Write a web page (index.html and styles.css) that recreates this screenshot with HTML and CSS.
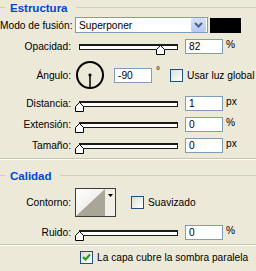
FILE: index.html
```html
<!DOCTYPE html>
<html lang="es">
<head>
    <meta charset="UTF-8">
    <title>Sombra paralela</title>
    <link rel="stylesheet" href="styles.css">
</head>
<body>

    <div class="panel">
        <!-- Estructura -->
        <div class="group-title"><span>Estructura</span></div>

        <div class="row row-fusion">
            <div class="label">Modo de fusión:</div>
            <div class="select">
                <span class="select-value">Superponer</span>
                <span class="select-btn">
                    <svg width="15" height="14" viewBox="0 0 15 14"><path d="M4 5 L7.5 8.5 L11 5" fill="none" stroke="#4d6185" stroke-width="2"/></svg>
                </span>
            </div>
            <div class="color-swatch"></div>
        </div>

        <div class="row">
            <div class="label">Opacidad:</div>
            <div class="slider">
                <div class="track"></div>
                <svg class="thumb" style="left: 82%" width="9" height="10" viewBox="0 0 9 10"><path d="M4.5 0.5 L8.5 4.5 L8.5 9.5 L0.5 9.5 L0.5 4.5 Z" fill="#fff" stroke="#000"/></svg>
            </div>
            <div class="field">82</div>
            <span class="unit">%</span>
        </div>

        <div class="row row-angle">
            <div class="label">Ángulo:</div>
            <svg class="dial" width="30" height="30" viewBox="0 0 30 30">
                <circle cx="15" cy="15" r="13" fill="none" stroke="#000" stroke-width="2"/>
                <line x1="15" y1="15" x2="15" y2="28" stroke="#000" stroke-width="1.5"/>
                <circle cx="15" cy="15" r="1.6" fill="#000"/>
            </svg>
            <div class="field field-angle">-90</div>
            <span class="unit unit-deg">°</span>
            <span class="checkbox"></span>
            <span class="check-label">Usar luz global</span>
        </div>

        <div class="row">
            <div class="label">Distancia:</div>
            <div class="slider">
                <div class="track"></div>
                <svg class="thumb" style="left: 0%" width="9" height="10" viewBox="0 0 9 10"><path d="M4.5 0.5 L8.5 4.5 L8.5 9.5 L0.5 9.5 L0.5 4.5 Z" fill="#fff" stroke="#000"/></svg>
            </div>
            <div class="field">1</div>
            <span class="unit">px</span>
        </div>

        <div class="row">
            <div class="label">Extensión:</div>
            <div class="slider">
                <div class="track"></div>
                <svg class="thumb" style="left: 0%" width="9" height="10" viewBox="0 0 9 10"><path d="M4.5 0.5 L8.5 4.5 L8.5 9.5 L0.5 9.5 L0.5 4.5 Z" fill="#fff" stroke="#000"/></svg>
            </div>
            <div class="field">0</div>
            <span class="unit">%</span>
        </div>

        <div class="row">
            <div class="label">Tamaño:</div>
            <div class="slider">
                <div class="track"></div>
                <svg class="thumb" style="left: 0%" width="9" height="10" viewBox="0 0 9 10"><path d="M4.5 0.5 L8.5 4.5 L8.5 9.5 L0.5 9.5 L0.5 4.5 Z" fill="#fff" stroke="#000"/></svg>
            </div>
            <div class="field">0</div>
            <span class="unit">px</span>
        </div>

        <div class="divider divider-group"></div>

        <!-- Calidad -->
        <div class="group-title group-title-2"><span>Calidad</span></div>

        <div class="row row-contour">
            <div class="label">Contorno:</div>
            <svg class="contour" width="41" height="29" viewBox="0 0 41 29">
                <defs>
                    <linearGradient id="contourBg" x1="0" y1="0" x2="1" y2="1">
                        <stop offset="0" stop-color="#ffffff"/>
                        <stop offset="1" stop-color="#e4e2da"/>
                    </linearGradient>
                </defs>
                <rect x="0.5" y="0.5" width="40" height="28" fill="#f1efe6" stroke="#3c3c3c"/>
                <rect x="1" y="1" width="29" height="27" fill="url(#contourBg)"/>
                <path d="M1 28 L30 1 L30 28 Z" fill="#a9a698"/>
                <path d="M33 6 L38 6 L35.5 9 Z" fill="#000"/>
            </svg>
            <span class="checkbox checkbox-soft"></span>
            <span class="check-label">Suavizado</span>
        </div>

        <div class="row row-noise">
            <div class="label">Ruido:</div>
            <div class="slider">
                <div class="track"></div>
                <svg class="thumb" style="left: 0%" width="9" height="10" viewBox="0 0 9 10"><path d="M4.5 0.5 L8.5 4.5 L8.5 9.5 L0.5 9.5 L0.5 4.5 Z" fill="#fff" stroke="#000"/></svg>
            </div>
            <div class="field">0</div>
            <span class="unit">%</span>
        </div>

        <div class="divider divider-bottom"></div>

        <div class="row row-knockout">
            <span class="checkbox checked">
                <svg width="11" height="11" viewBox="0 0 11 11"><path d="M2 5 L4.5 7.5 L9 2.5" fill="none" stroke="#21a121" stroke-width="2.2"/></svg>
            </span>
            <span class="check-label">La capa cubre la sombra paralela</span>
        </div>
    </div>

</body>
</html>
```

FILE: styles.css
```css
/* Base - XP style dialog panel */
body, html {
    margin: 0;
    padding: 0;
    background-color: #ece9d8;
    font-family: "Liberation Sans", Arial, sans-serif;
    font-size: 10.2px;
    color: #000;
}

.panel {
    width: 256px;
    height: 271px;
    overflow: hidden;
    white-space: nowrap;
}

/* Group titles with etched line */
.group-title {
    height: 15px;
    display: flex;
    align-items: center;
}

.group-title::before,
.group-title::after {
    content: "";
    height: 0;
    border-top: 1px solid #d0d0bf;
}

.group-title::before {
    width: 5px;
}

.group-title::after {
    flex-grow: 1;
}

.group-title span {
    padding: 0 8px 0 5px;
    font-weight: bold;
    font-size: 11.5px;
    color: #0046d5;
}

.group-title-2 {
    margin-top: 8px;
}

/* Rows */
.row {
    display: flex;
    align-items: center;
    height: 16px;
    margin-top: 5px;
}

.row-fusion {
    margin-top: 2px;
}

.label {
    width: 71px;
    flex-shrink: 0;
    text-align: right;
}

/* Blend mode select */
.select {
    margin-left: 4px;
    width: 131px;
    height: 14px;
    border: 1px solid #7f9db9;
    background-color: #fff;
    display: flex;
    align-items: center;
}

.select-value {
    flex-grow: 1;
    padding-left: 3px;
}

.select-btn {
    width: 15px;
    height: 14px;
    margin-right: 1px;
    border-radius: 2px;
    background: linear-gradient(#d7e3fd, #b5c9f4);
    display: flex;
}

.color-swatch {
    margin-left: 2px;
    width: 31px;
    height: 15px;
    background-color: #000;
}

/* Sliders */
.slider {
    position: relative;
    margin-left: 8px;
    width: 99px;
    height: 16px;
}

.track {
    margin-top: 6px;
    height: 3px;
    border: 1px solid #1a1a1a;
    border-top-width: 2px;
    background-color: #fff;
}

.thumb {
    position: absolute;
    top: 7px;
    margin-left: -4px;
}

/* Number fields */
.field {
    margin-left: 7px;
    width: 33px;
    height: 13px;
    line-height: 13px;
    padding-left: 3px;
    border: 1px solid #7f9db9;
    background-color: #fff;
}

.unit {
    margin-left: 3px;
    align-self: flex-start;
    padding-top: 1px;
}

/* Angle row */
.row-angle {
    height: 30px;
    margin-top: 6px;
}

.dial {
    margin-left: 4px;
}

.field-angle {
    margin-left: 9px;
}

.unit-deg {
    margin-left: 4px;
    padding-top: 5px;
}

/* Checkboxes */
.checkbox {
    width: 11px;
    height: 11px;
    border: 1px solid #1c5180;
    background: linear-gradient(135deg, #dcdcd7, #ffffff);
    display: flex;
    align-items: center;
    justify-content: center;
}

.row-angle .checkbox {
    margin-left: 10px;
}

.check-label {
    margin-left: 4px;
}

/* Dividers */
.divider {
    border-top: 1px solid #c7c5b2;
    border-bottom: 1px solid #fff;
}

.divider-group {
    margin-top: 5px;
}

.divider-bottom {
    margin-top: 4px;
}

/* Calidad */
.row-contour {
    height: 29px;
    margin-top: 5px;
}

.contour {
    margin-left: 4px;
}

.checkbox-soft {
    margin-left: 15px;
}

.row-noise {
    margin-top: 7px;
}

.row-knockout {
    margin-top: 4px;
    padding-left: 80px;
    height: 14px;
}

.checked {
    background: linear-gradient(135deg, #dcdcd7, #ffffff);
}
```
